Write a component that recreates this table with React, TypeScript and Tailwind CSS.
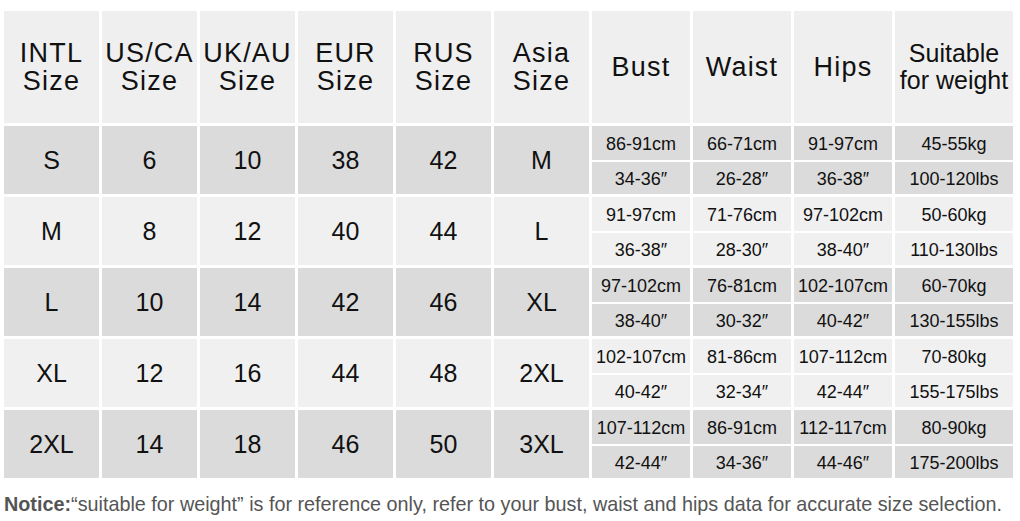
import React from 'react';

type Row = {
  intl: string;
  us: string;
  uk: string;
  eur: string;
  rus: string;
  asia: string;
  bust: [string, string];
  waist: [string, string];
  hips: [string, string];
  weight: [string, string];
};

const rows: Row[] = [
  { intl: 'S', us: '6', uk: '10', eur: '38', rus: '42', asia: 'M', bust: ['86-91cm', '34-36″'], waist: ['66-71cm', '26-28″'], hips: ['91-97cm', '36-38″'], weight: ['45-55kg', '100-120lbs'] },
  { intl: 'M', us: '8', uk: '12', eur: '40', rus: '44', asia: 'L', bust: ['91-97cm', '36-38″'], waist: ['71-76cm', '28-30″'], hips: ['97-102cm', '38-40″'], weight: ['50-60kg', '110-130lbs'] },
  { intl: 'L', us: '10', uk: '14', eur: '42', rus: '46', asia: 'XL', bust: ['97-102cm', '38-40″'], waist: ['76-81cm', '30-32″'], hips: ['102-107cm', '40-42″'], weight: ['60-70kg', '130-155lbs'] },
  { intl: 'XL', us: '12', uk: '16', eur: '44', rus: '48', asia: '2XL', bust: ['102-107cm', '40-42″'], waist: ['81-86cm', '32-34″'], hips: ['107-112cm', '42-44″'], weight: ['70-80kg', '155-175lbs'] },
  { intl: '2XL', us: '14', uk: '18', eur: '46', rus: '50', asia: '3XL', bust: ['107-112cm', '42-44″'], waist: ['86-91cm', '34-36″'], hips: ['112-117cm', '44-46″'], weight: ['80-90kg', '175-200lbs'] },
];

const cols = 'grid grid-cols-[95px_95px_95px_95px_95px_95px_98px_98px_98px_118px] gap-[3px]';

function HeadCell({ lines, small }: { lines: string[]; small?: boolean }) {
  return (
    <div className="bg-[#efefef] flex flex-col items-center justify-center">
      {lines.map((l) => (
        <span
          key={l}
          className={
            small
              ? 'text-[25px] leading-[27px] whitespace-nowrap'
              : 'text-[27px] leading-[28px] tracking-[1.2px] whitespace-nowrap'
          }
        >
          {l}
        </span>
      ))}
    </div>
  );
}

function SplitCell({ values, bg }: { values: [string, string]; bg: string }) {
  return (
    <div className="flex flex-col gap-[2px]">
      <div className={`${bg} h-[34px] pt-[2px] flex items-center justify-center text-[18px] leading-[20px]`}>
        {values[0]}
      </div>
      <div className={`${bg} h-[32px] pt-[2px] flex items-center justify-center text-[18px] leading-[20px]`}>
        {values[1]}
      </div>
    </div>
  );
}

export default function App() {
  return (
    <div
      className="w-[1020px] h-[521px] bg-white text-[#111] pl-[4px] pt-[11px]"
      style={{ fontFamily: '"Liberation Sans", Arial, sans-serif' }}
    >
      <div className="flex flex-col gap-[3px] w-[1009px]">
        <div className={`${cols} h-[112px]`}>
          <HeadCell lines={['INTL', 'Size']} />
          <HeadCell lines={['US/CA', 'Size']} />
          <HeadCell lines={['UK/AU', 'Size']} />
          <HeadCell lines={['EUR', 'Size']} />
          <HeadCell lines={['RUS', 'Size']} />
          <HeadCell lines={['Asia', 'Size']} />
          <HeadCell lines={['Bust']} />
          <HeadCell lines={['Waist']} />
          <HeadCell lines={['Hips']} />
          <HeadCell lines={['Suitable', 'for weight']} small />
        </div>
        {rows.map((r, i) => {
          const bg = i % 2 === 0 ? 'bg-[#dbdbdb]' : 'bg-[#f0f0f0]';
          return (
            <div key={r.intl} className={`${cols} h-[68px]`}>
              {[r.intl, r.us, r.uk, r.eur, r.rus, r.asia].map((v, j) => (
                <div key={j} className={`${bg} pt-[2px] flex items-center justify-center text-[25px]`}>
                  {v}
                </div>
              ))}
              <SplitCell values={r.bust} bg={bg} />
              <SplitCell values={r.waist} bg={bg} />
              <SplitCell values={r.hips} bg={bg} />
              <SplitCell values={r.weight} bg={bg} />
            </div>
          );
        })}
      </div>
      <p className="mt-[15px] text-[19.8px] leading-[22px] text-[#555] whitespace-nowrap">
        <span className="font-bold">Notice:</span>“suitable for weight” is for reference only, refer to your bust, waist and hips data for accurate size selection.
      </p>
    </div>
  );
}
